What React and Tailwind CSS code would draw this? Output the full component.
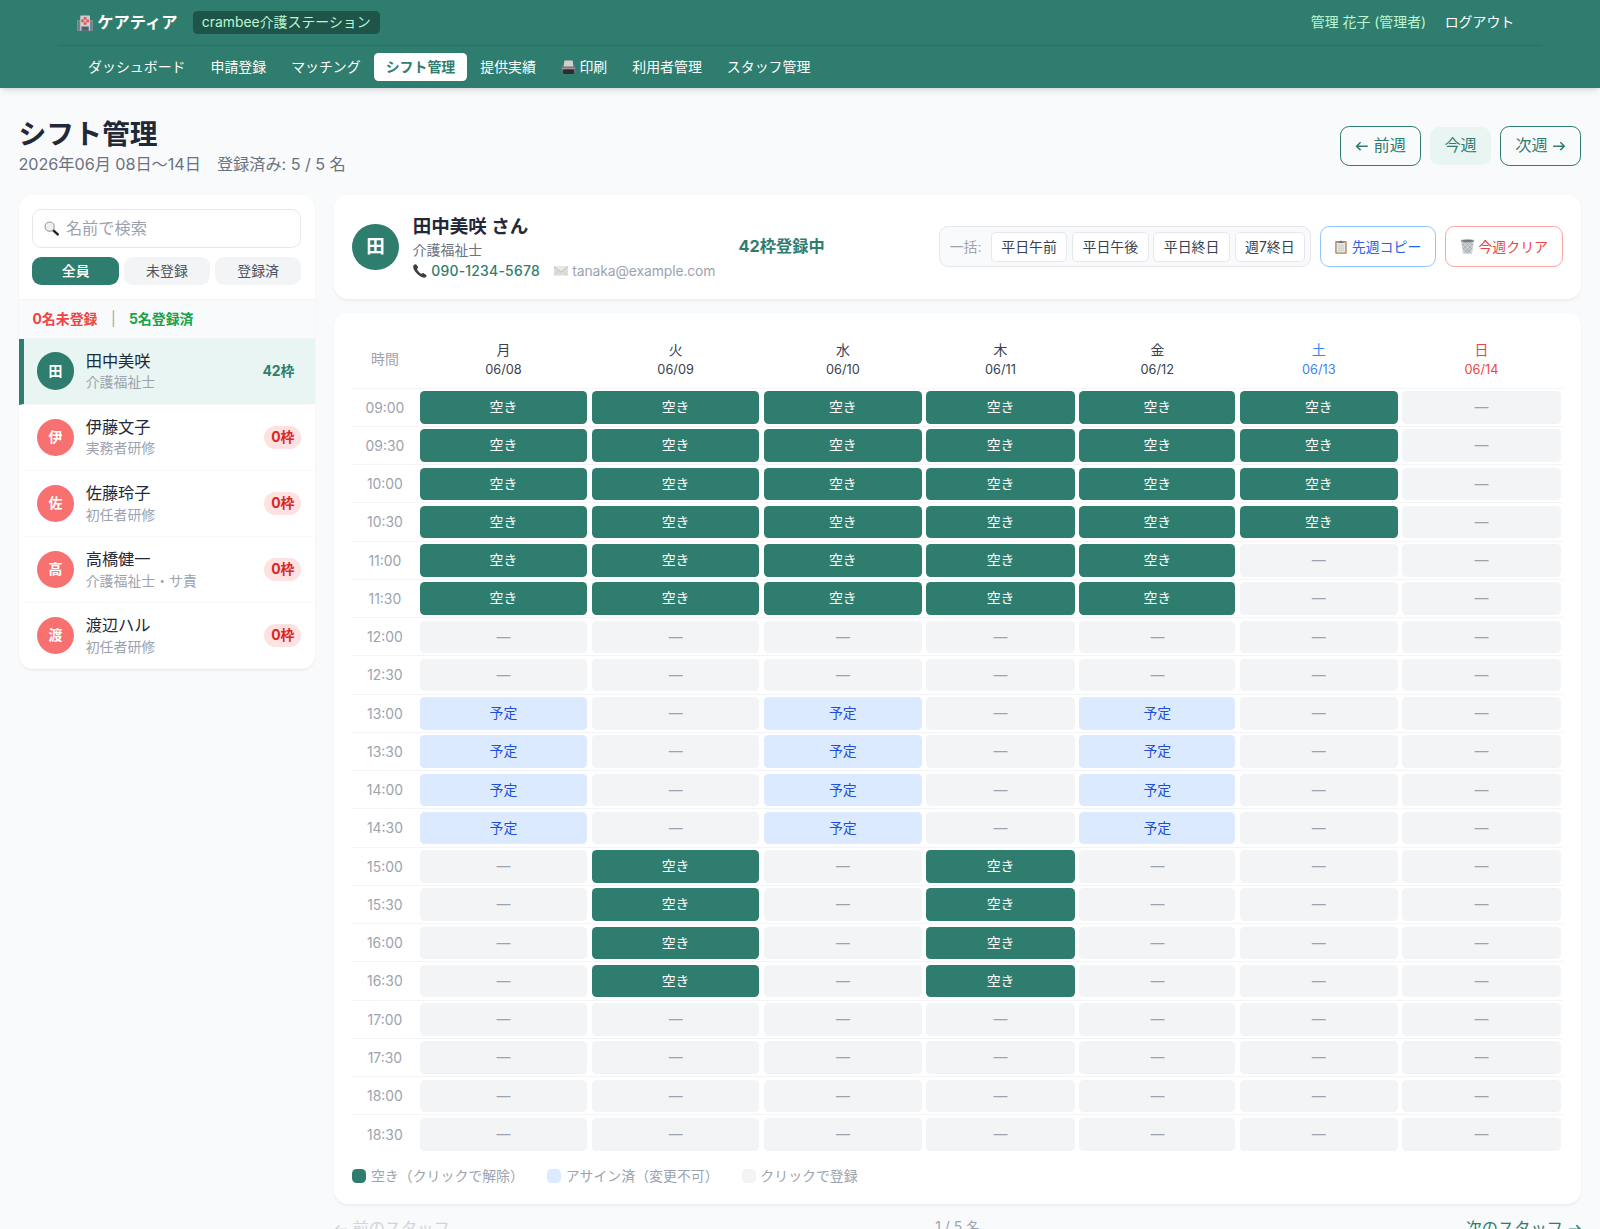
import React, { useState } from 'react';

const FREE = 'free';
const BOOKED = 'booked';

const navItems = ['ダッシュボード', '申請登録', 'マッチング', 'シフト管理', '提供実績', '印刷', '利用者管理', 'スタッフ管理'];

const staffList = [
    { id: 1, name: '田中美咲', role: '介護福祉士', count: 42, phone: '090-1234-5678', email: 'tanaka@example.com' },
    { id: 2, name: '伊藤文子', role: '実務者研修', count: 0 },
    { id: 3, name: '佐藤玲子', role: '初任者研修', count: 0 },
    { id: 4, name: '高橋健一', role: '介護福祉士・サ責', count: 0 },
    { id: 5, name: '渡辺ハル', role: '初任者研修', count: 0 },
];

const days = [
    { label: '月', date: '06/08', color: 'text-[#374151]', col: 'w-[148.5px]' },
    { label: '火', date: '06/09', color: 'text-[#374151]', col: 'w-[148.5px]' },
    { label: '水', date: '06/10', color: 'text-[#374151]', col: 'w-[140px]' },
    { label: '木', date: '06/11', color: 'text-[#374151]', col: 'w-[132px]' },
    { label: '金', date: '06/12', color: 'text-[#374151]', col: 'w-[138.5px]' },
    { label: '土', date: '06/13', color: 'text-[#3b82f6]', col: 'w-[140px]' },
    { label: '日', date: '06/14', color: 'text-[#ef4444]', col: 'w-[140.5px]' },
];

// 09:00 - 18:30, 30分刻み
const times = Array.from({ length: 20 }, (_, i) => {
    const hour = 9 + Math.floor(i / 2);
    return `${String(hour).padStart(2, '0')}:${i % 2 ? '30' : '00'}`;
});

const getSlot = (row, day) => {
    if (row < 6 && day < 5) return FREE;
    if (row < 4 && day === 5) return FREE;
    if (row >= 8 && row < 12 && [0, 2, 4].includes(day)) return BOOKED;
    if (row >= 12 && row < 16 && [1, 3].includes(day)) return FREE;
    return null;
};

const HospitalIcon = () => (
    <svg viewBox="0 0 16 16" className="w-[14px] h-[14px] shrink-0">
        <rect x="0" y="5" width="16" height="10.6" fill="#8b8f94" />
        <path d="M1.5 6v9M3 6v9M13 6v9M14.5 6v9" stroke="#5c7f86" strokeWidth=".8" />
        <rect x="3.2" y="0.4" width="9.6" height="15.2" rx=".6" fill="#cfcdd0" />
        <rect x="4.4" y="11.4" width="7.2" height="4.2" fill="#4c6270" />
        <path d="M8 2v7.6M4.2 5.8h7.6" stroke="#e2504f" strokeWidth="2.6" />
        <path d="M8 3.8v4M6 5.8h4" stroke="#f3c9c8" strokeWidth=".8" />
    </svg>
);

const PrinterIcon = () => (
    <svg viewBox="0 0 16 16" className="w-[13px] h-[13px] shrink-0">
        <rect x="0.4" y="5.4" width="15.2" height="8.4" rx="2" fill="#6a6d75" />
        <path d="M3.6 .6h8.8l.8 6.4H2.8z" fill="#d5cfc9" />
        <path d="M1 8.8h14" stroke="#a0a3aa" strokeWidth="1.2" />
        <rect x="2.2" y="10.2" width="11.6" height="4.6" rx="1" fill="#2b2c31" />
    </svg>
);

const SearchIcon = () => (
    <svg viewBox="0 0 16 16" className="w-[13px] h-[13px] shrink-0">
        <path d="M9.6 9.6l5 4.6" stroke="#222" strokeWidth="2.6" strokeLinecap="round" />
        <circle cx="6" cy="6" r="4.9" fill="#eef1f3" stroke="#8f9296" strokeWidth="1.1" />
    </svg>
);

const PhoneIcon = () => (
    <svg viewBox="0 0 16 16" className="w-3 h-3 shrink-0">
        <path d="M.6 1.6C1.7.2 3.2 0 4.1 1l1.5 2.3c.6 1.1-.1 1.8-1 2.5.8 2.2 2.8 4.5 5.1 5.7.8-.9 1.9-1.4 2.8-.7l2.4 1.6c1.1.9.8 2-.4 2.8-2.3 1.5-6.6-.6-9.8-4C1.4 7.9-.8 3.6.6 1.6z" fill="#3c3f43" />
    </svg>
);

const MailIcon = () => (
    <svg viewBox="0 0 16 16" className="w-3 h-3 shrink-0">
        <rect x="0" y="2.6" width="16" height="10.6" rx=".6" fill="#dcdcdc" />
        <path d="M.3 13l5.6-5.2M15.7 13l-5.6-5.2" stroke="#c6c6c6" strokeWidth=".7" />
        <path d="M.3 3l7.7 6.3L15.7 3" fill="#e9e9e9" stroke="#b4b4b4" strokeWidth=".8" />
    </svg>
);

const ClipboardIcon = () => (
    <svg viewBox="0 0 16 16" className="w-3 h-3 shrink-0">
        <rect x="1.4" y="1.2" width="13.2" height="14.6" rx="1" fill="#a98b62" />
        <rect x="3" y="3" width="10" height="11.3" fill="#e9e8e4" />
        <path d="M4.5 6h7M4.5 8h7M4.5 10h7M4.5 12h7" stroke="#bdbcb8" strokeWidth=".7" />
        <path d="M5 3.4V2l2-.5C7.2.4 8.8.4 9 1.5L11 2v1.4z" fill="#77787a" />
    </svg>
);

const TrashIcon = () => (
    <svg viewBox="0 0 16 16" className="w-[13px] h-[13px] shrink-0">
        <path d="M1.4 2l1.8 13.6h9.6L14.6 2z" fill="#cdd1d4" />
        <path d="M2.5 5l8.5 9.5M3 9l5.5 6M5 3l8 8M10 3l4 4M13.5 5L5 14.5M13 9l-5.5 6M11 3l-8 8M6 3L2.2 7" stroke="#92999d" strokeWidth=".6" />
        <ellipse cx="8" cy="2" rx="7.2" ry="1.5" fill="#6f777c" stroke="#a8aeb2" strokeWidth=".6" />
    </svg>
);

const ArrowLeft = () => (
    <svg viewBox="0 0 12 12" className="w-3 h-3 shrink-0" fill="none" stroke="currentColor" strokeWidth="1.3">
        <path d="M11 6.2H1.6M4.8 2.8L1.4 6.2l3.4 3.4" />
    </svg>
);

const ArrowRight = () => (
    <svg viewBox="0 0 12 12" className="w-3 h-3 shrink-0" fill="none" stroke="currentColor" strokeWidth="1.3">
        <path d="M1 6.2h9.4M7.2 2.8l3.4 3.4-3.4 3.4" />
    </svg>
);

const Slot = ({ type }) => {
    if (type === FREE) {
        return <button className="block w-full h-7 rounded bg-[#2f7d6e] text-white text-xs">空き</button>;
    }
    if (type === BOOKED) {
        return <button className="block w-full h-7 rounded bg-[#dbeafe] text-[#1d4ed8] text-xs">予定</button>;
    }
    return <button className="block w-full h-7 rounded bg-[#f3f4f6] text-[#9ca3af] text-xs">—</button>;
};

function Header() {
    return (
        <header className="bg-[#2f7d6e] text-white shadow-md">
            <div className="max-w-7xl mx-auto">
                <div className="h-10 px-4 flex items-center justify-between border-b border-[#2a7063]">
                    <div className="flex items-center gap-[13px]">
                        <div className="flex items-center gap-1 text-sm font-bold"><HospitalIcon />ケアティア</div>
                        <span className="bg-[#1f5449] text-[#bbf7d0] text-xs px-2 py-0.5 rounded">crambee介護ステーション</span>
                    </div>
                    <div className="flex items-center gap-4 mr-2 text-xs">
                        <span className="text-[#bbf7d0]">管理 花子 (管理者)</span>
                        <button>ログアウト</button>
                    </div>
                </div>
                <nav className="px-4 py-1.5 flex gap-[1.6px] text-xs">
                    {navItems.map(item => (
                        <button
                            key={item}
                            className={item === 'シフト管理'
                                ? 'px-2.5 py-1 rounded bg-white text-[#2f7d6e] font-bold'
                                : 'px-2.5 py-1 rounded flex items-center gap-[3px]'}
                        >
                            {item === '印刷' && <PrinterIcon />}
                            {item}
                        </button>
                    ))}
                </nav>
            </div>
        </header>
    );
}

function StaffSidebar({ selectedId, onSelect }) {
    return (
        <aside className="w-64 shrink-0 bg-white rounded-xl shadow-xs overflow-hidden">
            <div className="p-3 border-b border-[#f3f4f6]">
                <div className="h-[34px] flex items-center gap-1.5 border border-[#e5e7eb] rounded-lg pl-[9px] text-sm text-[#9ca3af]">
                    <SearchIcon />
                    名前で検索
                </div>
                <div className="flex gap-1 mt-2 text-xs">
                    <button className="flex-1 py-1 rounded-lg bg-[#2f7d6e] text-white font-medium">全員</button>
                    <button className="flex-1 py-1 rounded-lg bg-[#f3f4f6] text-[#4b5563]">未登録</button>
                    <button className="flex-1 py-1 rounded-lg bg-[#f3f4f6] text-[#4b5563]">登録済</button>
                </div>
            </div>
            <div className="px-3 pt-[8.6px] pb-[7.8px] bg-[#f9fafb] border-b border-[#f3f4f6] flex gap-[11.6px] text-xs">
                <span className="text-[#ef4444] font-bold">0名未登録</span>
                <span className="text-[#9ca3af]">|</span>
                <span className="text-[#16a34a] font-bold">5名登録済</span>
            </div>
            {staffList.map(s => {
                const active = s.id === selectedId;
                return (
                    <div
                        key={s.id}
                        onClick={() => onSelect(s.id)}
                        className={`h-[57px] pl-[11.6px] pr-3 flex items-center gap-2.5 border-b border-b-[#f9fafb] border-l-[4.5px] cursor-pointer ${active ? 'bg-[#e8f5f2] border-l-[#2f7d6e]' : 'border-l-transparent'}`}
                    >
                        <div className={`w-8 h-8 rounded-full flex items-center justify-center text-xs font-bold text-white ${s.count > 0 ? 'bg-[#2f7d6e]' : 'bg-[#f87171]'}`}>
                            {s.name[0]}
                        </div>
                        <div className="flex-1">
                            <div className="text-sm text-[#1f2937]">{s.name}</div>
                            <div className="text-xs text-[#9ca3af]">{s.role}</div>
                        </div>
                        <span className={`text-xs font-bold px-1.5 py-0.5 rounded-full ${s.count > 0 ? 'text-[#2f7d6e]' : 'bg-[#fee2e2] text-[#dc2626]'}`}>
                            {s.count}枠
                        </span>
                    </div>
                );
            })}
        </aside>
    );
}

function StaffDetail({ staff }) {
    return (
        <div className="bg-white rounded-xl shadow-xs p-4 flex items-center">
            <div className="w-10 h-10 rounded-full bg-[#2f7d6e] text-white font-bold flex items-center justify-center">
                {staff.name[0]}
            </div>
            <div className="ml-3">
                <div className="text-base font-bold text-[#1f2937]">{staff.name} さん</div>
                <div className="text-xs text-[#6b7280]">{staff.role}</div>
                {staff.phone && (
                    <div className="mt-0.5 flex gap-3 text-xs">
                        <span className="flex items-center gap-1 font-medium text-[#2f7d6e] tracking-[0.2px]"><PhoneIcon />{staff.phone}</span>
                        <span className="flex items-center gap-1 text-[#9ca3af] tracking-[-0.1px]"><MailIcon />{staff.email}</span>
                    </div>
                )}
            </div>
            <div className="ml-5 text-sm font-bold text-[#2f7d6e]">{staff.count}枠登録中</div>
            <div className="ml-auto flex gap-2 text-xs">
                <div className="flex items-center gap-1 p-1 rounded-lg border border-[#e5e7eb] bg-[#f9fafb]">
                    <span className="px-1 text-[#9ca3af]">一括:</span>
                    {['平日午前', '平日午後', '平日終日', '週7終日'].map(label => (
                        <button key={label} className="px-[8.2px] py-1 rounded border border-[#e5e7eb] bg-white text-[#374151]">{label}</button>
                    ))}
                </div>
                <button className="px-[11.6px] rounded-lg border border-[#93c5fd] text-[#2563eb] flex items-center gap-[3px]"><ClipboardIcon />先週コピー</button>
                <button className="px-3 rounded-lg border border-[#fca5a5] text-[#ef4444] flex items-center gap-[3px]"><TrashIcon />今週クリア</button>
            </div>
        </div>
    );
}

function ShiftTable() {
    return (
        <div className="mt-3 bg-white rounded-xl shadow-xs p-4">
            <table className="w-full table-fixed border-collapse text-xs">
                <colgroup>
                    <col className="w-14" />
                    {days.map(d => <col key={d.date} className={d.col} />)}
                </colgroup>
                <thead>
                    <tr className="h-[49px] border-b border-[#f3f4f6]">
                        <th className="p-0 font-normal text-[#9ca3af]">時間</th>
                        {days.map(d => (
                            <th key={d.date} className={`p-0 font-normal ${d.color}`}>
                                <div>{d.label}</div>
                                <div className="text-[11px] leading-[18px] -mb-0.5">{d.date}</div>
                            </th>
                        ))}
                    </tr>
                </thead>
                <tbody>
                    {times.map((time, row) => (
                        <tr key={time} className="h-[33px] border-b border-[#f3f4f6] last:border-b-0">
                            <td className="px-0 pt-px pb-0 text-center text-[#9ca3af]">{time}</td>
                            {days.map((d, i) => (
                                <td key={d.date} className="px-0.5 py-0"><Slot type={getSlot(row, i)} /></td>
                            ))}
                        </tr>
                    ))}
                </tbody>
            </table>
            <div className="mt-3 flex gap-5 text-xs text-[#9ca3af]">
                <span className="flex items-center gap-1"><span className="w-3 h-3 rounded bg-[#2f7d6e]" />空き（クリックで解除）</span>
                <span className="flex items-center gap-1"><span className="w-3 h-3 rounded bg-[#dbeafe]" />アサイン済（変更不可）</span>
                <span className="flex items-center gap-1"><span className="w-3 h-3 rounded bg-[#f3f4f6]" />クリックで登録</span>
            </div>
        </div>
    );
}

export default function App() {
    const [selectedId, setSelectedId] = useState(1);
    const staff = staffList.find(s => s.id === selectedId);

    return (
        <div className="[zoom:1.15942] h-[1060px] overflow-hidden bg-[#f8fafc] text-[#1f2937] font-['Inter','Noto_Sans_CJK_JP',sans-serif]">
            <Header />
            <main className="px-4 py-6">
                <div className="flex items-center justify-between">
                    <div>
                        <h1 className="text-2xl font-bold">シフト管理</h1>
                        <p className="text-sm text-[#6b7280] tracking-[-0.06px]">2026年06月 08日〜14日　登録済み: 5 / 5 名</p>
                    </div>
                    <div className="flex items-center gap-2 text-sm text-[#2f7d6e]">
                        <button className="px-[12.3px] py-1.5 rounded-lg border border-[#2f7d6e] flex items-center gap-1"><ArrowLeft />前週</button>
                        <button className="px-3 py-1.5 rounded-lg bg-[#e8f5f2]">今週</button>
                        <button className="px-[12.3px] py-1.5 rounded-lg border border-[#2f7d6e] flex items-center gap-1">次週<ArrowRight /></button>
                    </div>
                </div>
                <div className="mt-4 flex items-start gap-4">
                    <StaffSidebar selectedId={selectedId} onSelect={setSelectedId} />
                    <section className="flex-1 min-w-0">
                        <StaffDetail staff={staff} />
                        <ShiftTable />
                        <div className="mt-[11px] flex items-center justify-between text-sm">
                            <button className="flex items-center gap-1 text-[#d1d5db]"><ArrowLeft />前のスタッフ</button>
                            <span className="-mt-0.5 text-xs text-[#9ca3af]">{selectedId} / {staffList.length} 名</span>
                            <button className="flex items-center gap-1 text-[#2f7d6e]">次のスタッフ<ArrowRight /></button>
                        </div>
                    </section>
                </div>
            </main>
        </div>
    );
}
